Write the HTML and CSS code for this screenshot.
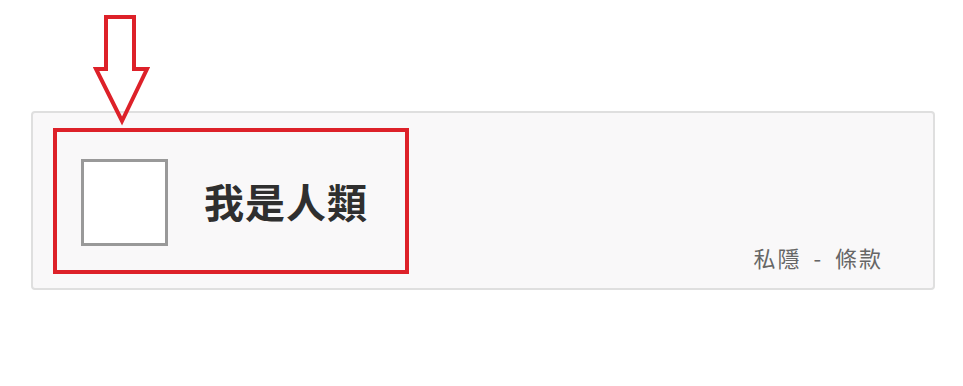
FILE: index.html
```html
<!DOCTYPE html>
<html lang="zh-Hant">
<head>
    <meta charset="UTF-8">
    <meta name="viewport" content="width=device-width, initial-scale=1.0">
    <title>我是人類</title>
    <link rel="stylesheet" href="styles.css">
</head>
<body>
    <svg class="arrow" width="60" height="112" viewBox="93 14 60 112">
        <polygon points="106,17 134,17 134,69 147,69 122,121 96,69 106,69" fill="none" stroke="#dd2129" stroke-width="4" stroke-linejoin="miter"/>
    </svg>
    <div class="captcha">
        <div class="highlight">
            <div class="checkbox"></div>
            <span class="label">我是人類</span>
        </div>
        <div class="links">私隱 - 條款</div>
    </div>
</body>
</html>
```

FILE: styles.css
```css
body {
    margin: 0;
    background: #ffffff;
    font-family: "Noto Sans CJK TC", "Noto Sans", sans-serif;
    position: relative;
}
.arrow {
    position: absolute;
    left: 93px;
    top: 14px;
    z-index: 2;
}
.captcha {
    margin: 111px 0 0 31px;
    width: 904px;
    height: 179px;
    box-sizing: border-box;
    border: 2px solid #dfdfdf;
    border-radius: 4px;
    background: #f9f8f9;
    display: flex;
    justify-content: space-between;
    align-items: flex-end;
    padding: 15px 50px 16px 20px;
}
.highlight {
    width: 356px;
    height: 146px;
    box-sizing: border-box;
    border: 4px solid #dd2129;
    display: flex;
    align-items: center;
    align-self: flex-start;
    padding-left: 24px;
}
.checkbox {
    width: 87px;
    height: 87px;
    box-sizing: border-box;
    border: 3px solid #999999;
    background: #ffffff;
    margin-top: 2px;
}
.label {
    margin-left: 36px;
    font-size: 40px;
    font-weight: bold;
    color: #2f2f2f;
    letter-spacing: 1px;
}
.links {
    font-size: 22px;
    color: #666666;
    line-height: 30px;
    letter-spacing: 2px;
    word-spacing: 5px;
}
```
